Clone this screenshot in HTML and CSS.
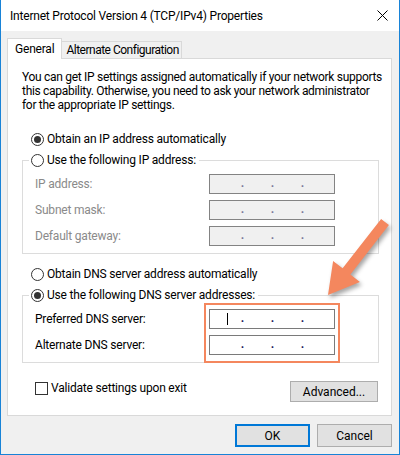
FILE: index.html
```html
<!DOCTYPE html>
<html lang="en">
<head>
  <meta charset="UTF-8" />
  <title>Internet Protocol Version 4 (TCP/IPv4) Properties</title>
  <link rel="stylesheet" href="styles.css">
</head>
<body>
  <div class="window">
    <div class="titlebar">
      <span class="title">Internet Protocol Version 4 (TCP/IPv4) Properties</span>
      <svg class="close" width="11" height="11" viewBox="0 0 11 11">
        <path d="M0.5 0.5 L10.5 10.5 M10.5 0.5 L0.5 10.5" stroke="#000" stroke-width="1" fill="none" />
      </svg>
    </div>

    <div class="client">
      <div class="tabs">
        <div class="tab active">General</div>
        <div class="tab">Alternate Configuration</div>
      </div>

      <div class="panel">
        <p class="intro">You can get IP settings assigned automatically if your network supports<br>this capability. Otherwise, you need to ask your network administrator<br>for the appropriate IP settings.</p>

        <div class="option first"><span class="radio checked"></span>Obtain an IP address automatically</div>
        <fieldset class="group">
          <legend class="option"><span class="radio"></span>Use the following IP address:</legend>
          <div class="field disabled">
            <span class="label">IP address:</span>
            <span class="ip"><span class="seg">.</span><span class="seg">.</span><span class="seg">.</span></span>
          </div>
          <div class="field disabled">
            <span class="label">Subnet mask:</span>
            <span class="ip"><span class="seg">.</span><span class="seg">.</span><span class="seg">.</span></span>
          </div>
          <div class="field disabled">
            <span class="label">Default gateway:</span>
            <span class="ip"><span class="seg">.</span><span class="seg">.</span><span class="seg">.</span></span>
          </div>
        </fieldset>

        <div class="option dns"><span class="radio"></span>Obtain DNS server address automatically</div>
        <fieldset class="group">
          <legend class="option"><span class="radio checked"></span>Use the following DNS server addresses:</legend>
          <div class="field">
            <span class="label">Preferred DNS server:</span>
            <span class="ip"><span class="caret"></span><span class="seg">.</span><span class="seg">.</span><span class="seg">.</span></span>
          </div>
          <div class="field">
            <span class="label">Alternate DNS server:</span>
            <span class="ip"><span class="seg">.</span><span class="seg">.</span><span class="seg">.</span></span>
          </div>
        </fieldset>

        <div class="footer-row">
          <label class="check"><span class="box"></span>Validate settings upon exit</label>
          <button class="btn advanced">Advanced...</button>
        </div>
      </div>

      <div class="actions">
        <button class="btn primary">OK</button>
        <button class="btn">Cancel</button>
      </div>
    </div>

    <!-- annotation drawn over the dialog -->
    <div class="callout-box"></div>
    <svg class="callout-arrow" width="75" height="90" viewBox="0 0 75 90">
      <path d="M8 83 L13.1 48.9 L22.6 56.3 L61.1 6.9 L68.9 13.1 L30.4 62.5 L39.9 69.9 Z" fill="#f4875e" />
    </svg>
  </div>
</body>
</html>
```

FILE: styles.css
```css
body { margin: 0; font-family: Roboto, "Noto Sans", sans-serif; font-size: 12px; letter-spacing: -0.2px; color: #000; }

.window { position: relative; width: 400px; height: 455px; box-sizing: border-box; border: 1px solid #1883d7; border-top: none; background: #f0f0f0; display: flex; flex-direction: column; overflow: hidden; }

.titlebar { height: 31px; background: #fff; display: flex; align-items: center; justify-content: space-between; padding: 0 10px 0 9px; flex-shrink: 0; }
.title { line-height: 16px; }
.close { display: block; margin-right: 1px; }

.client { padding: 7px 7px 0 6px; }

.tabs { display: flex; align-items: flex-end; height: 20px; position: relative; z-index: 1; }
.tab { height: 17px; line-height: 16px; padding: 0 2px 0 4px; border: 1px solid #d9d9d9; border-bottom: none; border-left: none; box-sizing: border-box; background: #f0f0f0; white-space: nowrap; letter-spacing: -0.5px; }
.tab.active { height: 21px; margin-bottom: -1px; padding: 2px 7px 0; border-left: 1px solid #d9d9d9; background: #fff; letter-spacing: -0.2px; }

.panel { height: 358px; box-sizing: border-box; border: 1px solid #d9d9d9; background: #fff; padding: 11px 12px 0 14px; }

.intro { margin: 0; line-height: 14px; white-space: nowrap; letter-spacing: -0.3px; }

.option { display: flex; align-items: center; height: 20px; line-height: 20px; white-space: nowrap; }
.option.first { margin-top: 17px; padding-left: 9px; }
.option.dns { margin-top: 10px; padding-left: 9px; }

.radio { width: 13px; height: 13px; box-sizing: border-box; border: 1px solid #333; border-radius: 50%; margin-right: 3px; display: flex; align-items: center; justify-content: center; flex-shrink: 0; }
.radio.checked::after { content: ""; width: 7px; height: 7px; border-radius: 50%; background: #333; }

.group { margin: 1px 0 0; padding: 4px 12px 7px; border: 1px solid #dcdcdc; min-width: 0; }
.group legend { padding: 0 3px 0 2px; margin-left: -6px; }

.field { display: flex; align-items: center; height: 20px; }
.field + .field { margin-top: 6px; }
.label { width: 174px; }
.field.disabled .label { color: #8a8a8a; }

.ip { position: relative; display: flex; width: 126px; height: 20px; box-sizing: border-box; border: 1px solid #7a7a7a; background: #fff; padding-left: 4px; color: #1a1a60; }
.field.disabled .ip { background: #f0f0f0; border-color: #838383; color: #7a7a9a; }
.seg { width: 30px; text-align: right; line-height: 17px; font-weight: bold; }
.caret { position: absolute; left: 17px; top: 3px; width: 1px; height: 12px; background: #000; }

.footer-row { display: flex; justify-content: space-between; align-items: flex-start; margin-top: 18px; }
.check { display: flex; align-items: center; margin-left: 13px; line-height: 13px; margin-top: 1px; }
.box { width: 13px; height: 13px; box-sizing: border-box; border: 1px solid #333; margin-right: 3px; }

.btn { font: inherit; color: #000; background: #e1e1e1; border: 1px solid #adadad; height: 23px; width: 75px; padding: 0; }
.btn.advanced { width: 88px; height: 21px; margin-right: 1px; }
.btn.primary { border: 2px solid #0078d7; }

.actions { display: flex; justify-content: flex-end; gap: 7px; margin-top: 8px; }

.callout-box { position: absolute; left: 203px; top: 303px; width: 136px; height: 60px; box-sizing: border-box; border: 2px solid #f4875e; }
.callout-arrow { position: absolute; left: 319px; top: 212px; filter: drop-shadow(2px 3px 2px rgba(0,0,0,0.35)); }
```
